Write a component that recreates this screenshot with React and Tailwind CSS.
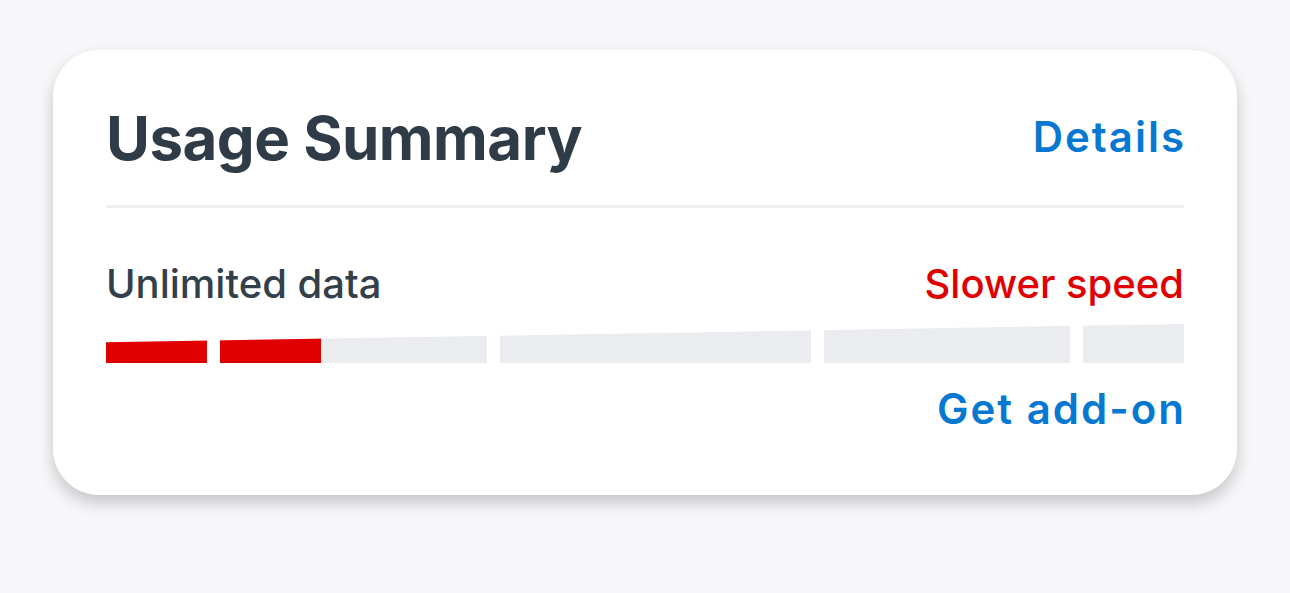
const segments = [
  { w: 101, fill: 101 },
  { w: 267, fill: 101 },
  { w: 311, fill: 0 },
  { w: 246, fill: 0 },
  { w: 101, fill: 0 },
];

const UsageBar = () => (
  <div className="flex h-[39px] w-full gap-[13px] [clip-path:polygon(0_47%,100%_0,100%_100%,0_100%)]">
    {segments.map((s, i) => (
      <div
        key={i}
        className="relative h-full bg-[#ebecef]"
        style={{ width: s.w }}
      >
        {s.fill > 0 && (
          <div
            className="absolute inset-y-0 left-0 bg-[#e00000]"
            style={{ width: s.fill }}
          />
        )}
      </div>
    ))}
  </div>
);

export default function App() {
  return (
    <div className="min-h-[593px] bg-[#f7f7fa] pt-[50px] pl-[53px] font-['Inter',sans-serif]">
      <div className="w-[1184px] h-[445px] rounded-[46px] bg-white px-[53px] pt-[52px] shadow-[0_8px_16px_rgba(0,0,0,0.2)]">
        <div className="flex items-center justify-between">
          <h2 className="text-[60px] leading-[72px] font-bold tracking-[-0.5px] text-[#2f3b46]">
            Usage Summary
          </h2>
          <a className="-mr-[2px] mb-[2px] text-[42px] leading-[52px] font-semibold tracking-[2px] text-[#0778d2]">
            Details
          </a>
        </div>
        <div className="mt-[31px] h-[3px] bg-[#eeeff2]" />
        <div className="mt-[52px] flex items-baseline justify-between">
          <span className="text-[40px] leading-[48px] font-medium text-[#333f4a]">
            Unlimited data
          </span>
          <span className="text-[40px] leading-[48px] font-medium text-[#e00000]">
            Slower speed
          </span>
        </div>
        <div className="mt-[16px]">
          <UsageBar />
        </div>
        <div className="mt-[20px] flex justify-end">
          <a className="-mr-[2px] text-[42px] leading-[52px] font-semibold tracking-[2px] text-[#0778d2]">
            Get add-on
          </a>
        </div>
      </div>
    </div>
  );
}
